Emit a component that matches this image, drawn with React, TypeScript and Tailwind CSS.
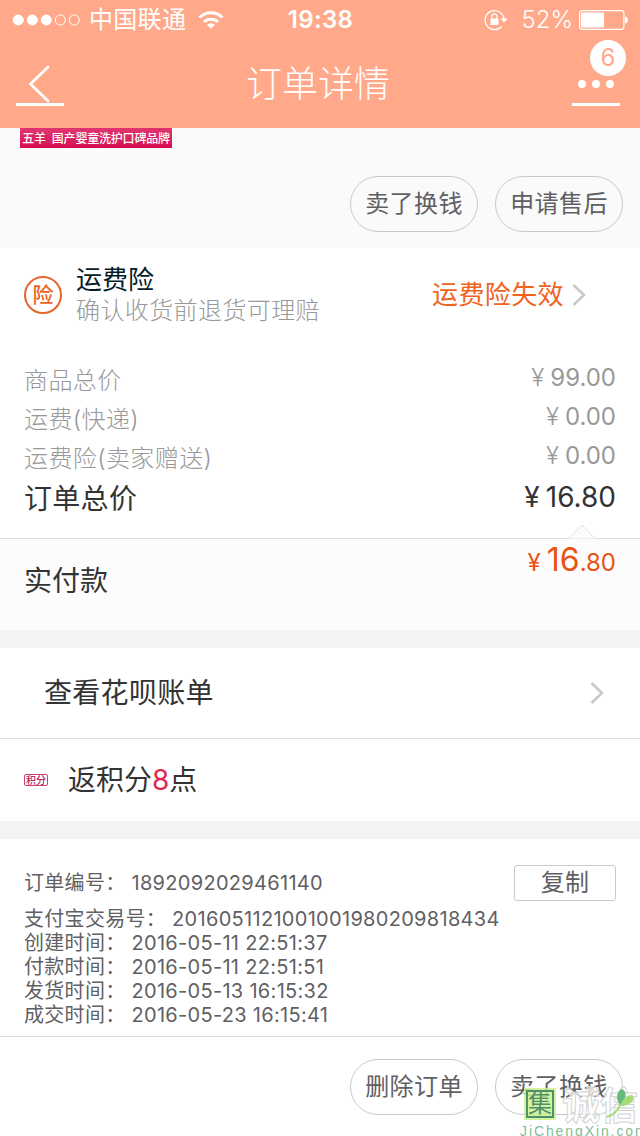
import type { ReactNode } from "react";

const prices = [
    { label: "商品总价", value: "99.00" },
    { label: "运费(快递)", value: "0.00" },
    { label: "运费险(卖家赠送)", value: "0.00" },
];

const times = [
    { label: "支付宝交易号：", value: "2016051121001001980209818434" },
    { label: "创建时间：", value: "2016-05-11 22:51:37" },
    { label: "付款时间：", value: "2016-05-11 22:51:51" },
    { label: "发货时间：", value: "2016-05-13 16:15:32" },
    { label: "成交时间：", value: "2016-05-23 16:15:41" },
];

function StatusBar() {
    return (
        <div className="flex h-10 items-center pl-3 pr-[11px]">
            <div className="flex flex-1 items-center">
                <svg width="70" height="12" viewBox="0 0 70 12" fill="#fff" stroke="#fff">
                    <circle cx="6.3" cy="6" r="5" />
                    <circle cx="20.3" cy="6" r="5" />
                    <circle cx="34.3" cy="6" r="5" />
                    <circle cx="48.3" cy="6" r="5" fill="none" />
                    <circle cx="62.3" cy="6" r="5" fill="none" />
                </svg>
                <span className="ml-[7px] text-2xl leading-10 tracking-[0.3px]">中国联通</span>
                <svg className="ml-[12px]" width="26" height="20" viewBox="0 0 26 20" fill="none" stroke="#fff" strokeWidth="3">
                    <path d="M1.5 7.5a16.3 16.3 0 0 1 23 0" />
                    <path d="M6 12a10 10 0 0 1 14 0" />
                    <path d="M13 18.8l-4-4a5.7 5.7 0 0 1 8 0z" fill="#fff" stroke="none" />
                </svg>
            </div>
            <span className="text-2xl font-semibold leading-10 tracking-[0.3px]">19:38</span>
            <div className="flex flex-1 items-center justify-end">
                <svg width="24" height="22" viewBox="0 0 24 22" fill="none" stroke="#fff" strokeWidth="1.3">
                    <path d="M20 10A9.5 9.5 0 1 0 17.6 17.5" />
                    <path d="M16.6 9.4h7l-3.5 4z" fill="#fff" stroke="none" />
                    <rect x="6.5" y="9.5" width="8" height="6.5" rx="0.8" fill="#fff" stroke="none" />
                    <path d="M8 10V7.4a2.5 2.5 0 0 1 5 0V10" />
                </svg>
                <span className="ml-[14px] text-2xl font-light leading-10">52%</span>
                <svg className="ml-[6px]" width="50" height="20" viewBox="0 0 50 20" fill="none" stroke="#fff">
                    <rect x="0.6" y="0.7" width="44.3" height="18.6" rx="2.5" strokeWidth="1.2" />
                    <rect x="2" y="2.5" width="23" height="15" rx="1" fill="#fff" stroke="none" />
                    <path d="M46 6.5c2 .5 3 1.700 3 3.500s-1 3-3 3.500z" fill="#fff" stroke="none" />
                </svg>
            </div>
        </div>
    );
}

function NavBar() {
    return (
        <div className="flex h-[88px] justify-between px-4">
            <div className="flex h-[66px] w-12 flex-col justify-end border-b-[3px] border-white">
                <svg className="ml-[12px]" width="24" height="40" viewBox="0 0 24 40" fill="none" stroke="#fff" strokeWidth="2.800" strokeLinecap="round" strokeLinejoin="round">
                    <path d="M20 4L2.500 21L20 38" />
                </svg>
            </div>
            <h1 className="text-4xl font-light leading-[88px]">订单详情</h1>
            <div className="relative mr-1 flex h-[66px] w-12 items-end justify-center gap-[6px] border-b-[3px] border-white pb-[15px]">
                <i className="size-2 rounded-full bg-white" />
                <i className="size-2 rounded-full bg-white" />
                <i className="size-2 rounded-full bg-white" />
                <span className="absolute left-[18px] top-0 size-9 rounded-full bg-white text-center text-2xl leading-9 text-[#ffa98a]">6</span>
            </div>
        </div>
    );
}

function PillButton({ children }: { children: ReactNode }) {
    return (
        <button className="h-14 w-32 rounded-full border border-[#c9c9c9] text-center text-2xl leading-[54px] tracking-[0.4px] text-[#5f6063]">
            {children}
        </button>
    );
}

function Chevron() {
    return (
        <svg width="14" height="24" viewBox="0 0 14 24" fill="none" stroke="#c8c8cb" strokeWidth="2.500">
            <path d="M1.500 2L12 12L1.500 22" />
        </svg>
    );
}

// Stamp of the hosting site, laid over the bottom right corner
function SiteStamp() {
    return (
        <div className="absolute bottom-0 right-0 h-12 w-[122px]">
            <div className="absolute left-[6px] top-0 flex size-[32px] items-center justify-center bg-[#c9f08a]/80">
                <span className="size-7 border-2 border-[#4f8f6c] text-center text-2xl leading-6 text-[#4f8f6c]">集</span>
            </div>
            <span className="absolute left-[44px] top-[-1px] whitespace-nowrap text-[38px] font-bold leading-9 text-white/70 [-webkit-text-stroke:1px_#d3d3d3]">诚信</span>
            <svg className="absolute left-[88px] top-0" width="30" height="32" viewBox="0 0 30 32">
                <path d="M14 17C9 11 11 2 16 1C21 3 21 11 14 17Z" fill="#67b87a" />
                <path d="M14 18C17 9 25 5 27 8C29 13 22 19 14 18Z" fill="#a5dc76" />
                <path d="M14 17C12 23 7 27 1 29" fill="none" stroke="#a5dc76" strokeWidth="2" />
            </svg>
            <span className="absolute left-[2px] top-[35px] font-['Liberation_Sans',sans-serif] text-[14px] leading-[16px] tracking-[1.900px] text-[#82bd94]">JiChengXin.com</span>
        </div>
    );
}

export default function App() {
    return (
        <div className="relative flex h-[1136px] w-[640px] flex-col overflow-hidden bg-white font-['Inter','Noto_Sans_CJK_SC',sans-serif] text-[#333]">
            <header className="h-32 bg-[#ffa98a] text-white">
                <StatusBar />
                <NavBar />
            </header>

            <section className="h-[120px] bg-[#fafafa]">
                <div className="ml-5 h-5 w-[152px] whitespace-nowrap bg-gradient-to-b from-[#df3470] to-[#d80852] text-center text-[12px] font-medium leading-[21px] tracking-[-0.2px] text-white">
                    五羊&nbsp; 国产婴童洗护口碑品牌
                </div>
                <div className="mt-7 flex justify-end gap-[17px] pr-[17px]">
                    <PillButton>卖了换钱</PillButton>
                    <PillButton>申请售后</PillButton>
                </div>
            </section>

            <section className="flex h-[93px] items-center pl-6 pr-[54px]">
                <span className="size-[38px] shrink-0 rounded-full border-2 border-[#e5652a] text-center text-[21px] font-medium leading-[33px] text-[#f0621d]">险</span>
                <div className="ml-[14px] flex-1">
                    <p className="text-[26px] leading-[31px] text-[#051b28]">运费险</p>
                    <p className="text-2xl font-light leading-[31px] tracking-[0.4px] text-[#999]">确认收货前退货可理赔</p>
                </div>
                <span className="mr-2 text-[26px] leading-[36px] tracking-[0.4px] text-[#f0621d]">运费险失效</span>
                <Chevron />
            </section>

            <section className="relative h-[198px] border-b border-[#dedede] px-6 pt-5">
                {prices.map((p) => (
                    <div key={p.label} className="flex h-[39px] justify-between text-2xl leading-[39px] text-[#999]">
                        <span className="font-light tracking-[0.4px]">{p.label}</span>
                        <span className="-mt-[3px]"><span className="mr-[6px] font-light">¥</span>{p.value}</span>
                    </div>
                ))}
                <div className="flex h-[42px] justify-between text-[28px] leading-[42px]">
                    <span className="tracking-[0.3px]">订单总价</span>
                    <span className="-mt-[2px]"><span className="mr-[6px]">¥</span>16.80</span>
                </div>
                <svg className="absolute -bottom-px right-[44px]" width="28" height="15" viewBox="0 0 28 15">
                    <path d="M1 14.500L14 1L27 14.500" fill="#fcfcfc" stroke="#dedede" />
                </svg>
            </section>

            <section className="flex h-[91px] justify-between bg-[#fcfcfc] px-6 leading-[84px]">
                <span className="text-[28px]">实付款</span>
                <span className="text-2xl text-[#e85413]">
                    <span className="mr-[6px]">¥</span>
                    <span className="text-[32px]">16</span>.80
                </span>
            </section>

            <div className="h-[18px] bg-[#f3f3f3]" />
            <section className="flex h-[91px] items-center justify-between border-b border-[#dedede] pl-11 pr-9">
                <span className="text-[28px] leading-[90px] tracking-[0.3px]">查看花呗账单</span>
                <Chevron />
            </section>
            <section className="flex h-[82px] items-center pl-6">
                <span className="h-3 w-6 rounded-[2px] border border-[#c94279] text-center text-[10px] font-medium leading-[10px] text-[#c02663]">积分</span>
                <span className="ml-5 text-[28px] leading-[82px]">返积分<span className="text-[#de2754]">8</span>点</span>
            </section>
            <div className="h-[18px] bg-[#f3f3f3]" />

            <section className="h-[198px] border-b border-[#dedede] px-6 pt-[26px] text-xl leading-6 tracking-[0.3px] text-[#5f6063]">
                <div className="mb-[6px] flex h-9 items-center justify-between">
                    <p>订单编号：<span className="ml-[6px]">1892092029461140</span></p>
                    <button className="h-9 w-[102px] rounded-[3px] border border-[#c9c9c9] text-2xl leading-[34px]">复制</button>
                </div>
                {times.map((t) => (
                    <p key={t.label} className="whitespace-nowrap">
                        {t.label}<span className="ml-[6px]">{t.value}</span>
                    </p>
                ))}
            </section>

            <footer className="flex h-[99px] items-center justify-end gap-[17px] pr-[17px]">
                <PillButton>删除订单</PillButton>
                <PillButton>卖了换钱</PillButton>
            </footer>
            <SiteStamp />
        </div>
    );
}
